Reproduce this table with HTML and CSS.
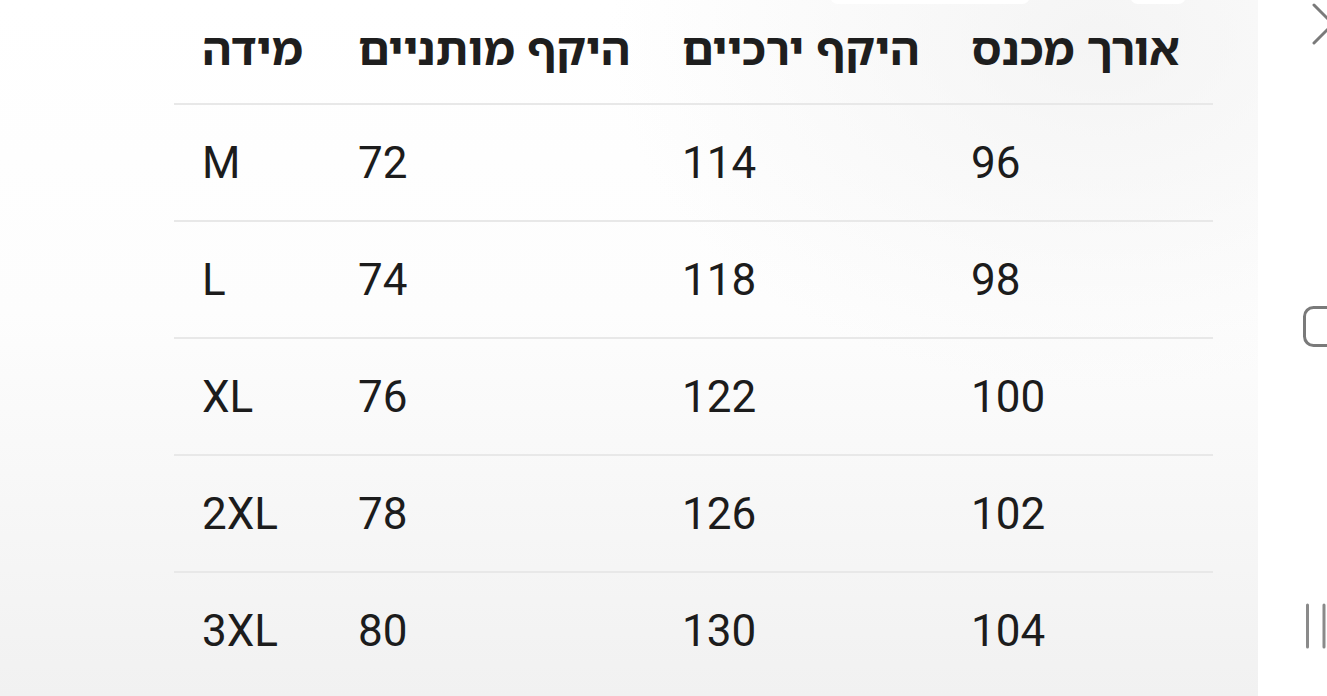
FILE: index.html
```html
<!DOCTYPE html>
<html lang="he">
<head>
<meta charset="utf-8">
<link rel="stylesheet" href="styles.css">
</head>
<body>
<div class="screen">
  <main class="content">
    <div class="top-tabs">
      <span class="tab tab-a"></span>
      <span class="tab tab-b"></span>
    </div>
    <table class="sizes">
      <colgroup>
        <col class="c1"><col class="c2"><col class="c3"><col class="c4">
      </colgroup>
      <thead>
        <tr><th>מידה</th><th>היקף מותניים</th><th>היקף ירכיים</th><th>אורך מכנס</th></tr>
      </thead>
      <tbody>
        <tr><td>M</td><td>72</td><td>114</td><td>96</td></tr>
        <tr><td>L</td><td>74</td><td>118</td><td>98</td></tr>
        <tr><td>XL</td><td>76</td><td>122</td><td>100</td></tr>
        <tr><td>2XL</td><td>78</td><td>126</td><td>102</td></tr>
        <tr><td>3XL</td><td>80</td><td>130</td><td>104</td></tr>
      </tbody>
    </table>
  </main>
  <aside class="navbar">
    <svg class="nav-icon nav-close" width="69" height="50" viewBox="0 0 69 50"><path d="M56 4 L80 28 M56 42 L80 18" stroke="#7a7a7a" stroke-width="3" stroke-linecap="round" fill="none"/></svg>
    <svg class="nav-icon nav-home" width="69" height="44" viewBox="0 0 69 44"><rect x="46.5" y="2.5" width="40" height="38" rx="9" stroke="#7a7a7a" stroke-width="3" fill="none"/></svg>
    <svg class="nav-icon nav-recent" width="69" height="48" viewBox="0 0 69 48"><path d="M49.5 3 V45 M66 3 V45" stroke="#8a8a8a" stroke-width="3" stroke-linecap="round" fill="none"/></svg>
  </aside>
</div>
</body>
</html>
```
FILE: styles.css
```css
* { box-sizing: border-box; }
html, body { margin: 0; padding: 0; }
body {
  width: 1327px;
  height: 696px;
  overflow: hidden;
  font-family: Roboto, "DejaVu Sans", "Liberation Sans", sans-serif;
  color: #1c1c1c;
}
.screen {
  display: flex;
  width: 1327px;
  height: 696px;
}
.content {
  position: relative;
  width: 1258px;
  height: 696px;
  background:
    radial-gradient(ellipse 700px 500px at 1100px 40px, rgba(240,240,240,0.7), rgba(240,240,240,0) 70%),
    linear-gradient(to bottom, #ffffff 0%, #fdfdfd 45%, #f1f1f1 100%);
  padding-left: 174px;
}
.top-tabs {
  position: absolute;
  top: -12px;
  left: 830px;
  display: flex;
  gap: 100px;
}
.tab {
  display: block;
  height: 16px;
  background: #ffffff;
  border-radius: 8px;
}
.tab-a { width: 200px; }
.tab-b { width: 56px; }
.sizes {
  margin-top: -13px;
  border-collapse: collapse;
  width: 1039px;
  table-layout: fixed;
  direction: ltr;
}
.c1 { width: 156px; }
.c2 { width: 324px; }
.c3 { width: 289px; }
.c4 { width: 270px; }
.sizes th, .sizes td {
  height: 117px;
  padding: 0 0 0 28px;
  text-align: left;
  vertical-align: middle;
  border-bottom: 2px solid #e8e8e8;
  white-space: nowrap;
}
.sizes tbody tr:last-child td { border-bottom: none; }
.sizes th {
  font-family: "Noto Sans Hebrew", "Noto Sans", "DejaVu Sans", sans-serif;
  font-weight: bold;
  font-size: 45px;
  color: #1e1e1e;
  padding-top: 4px;
}
.sizes td {
  font-size: 44px;
  font-weight: 400;
  color: #1c1c1c;
}
.navbar {
  width: 69px;
  height: 696px;
  background: #ffffff;
  display: flex;
  flex-direction: column;
  justify-content: space-between;
  padding: 1px 0 46px;
}
.nav-icon { display: block; }
```
